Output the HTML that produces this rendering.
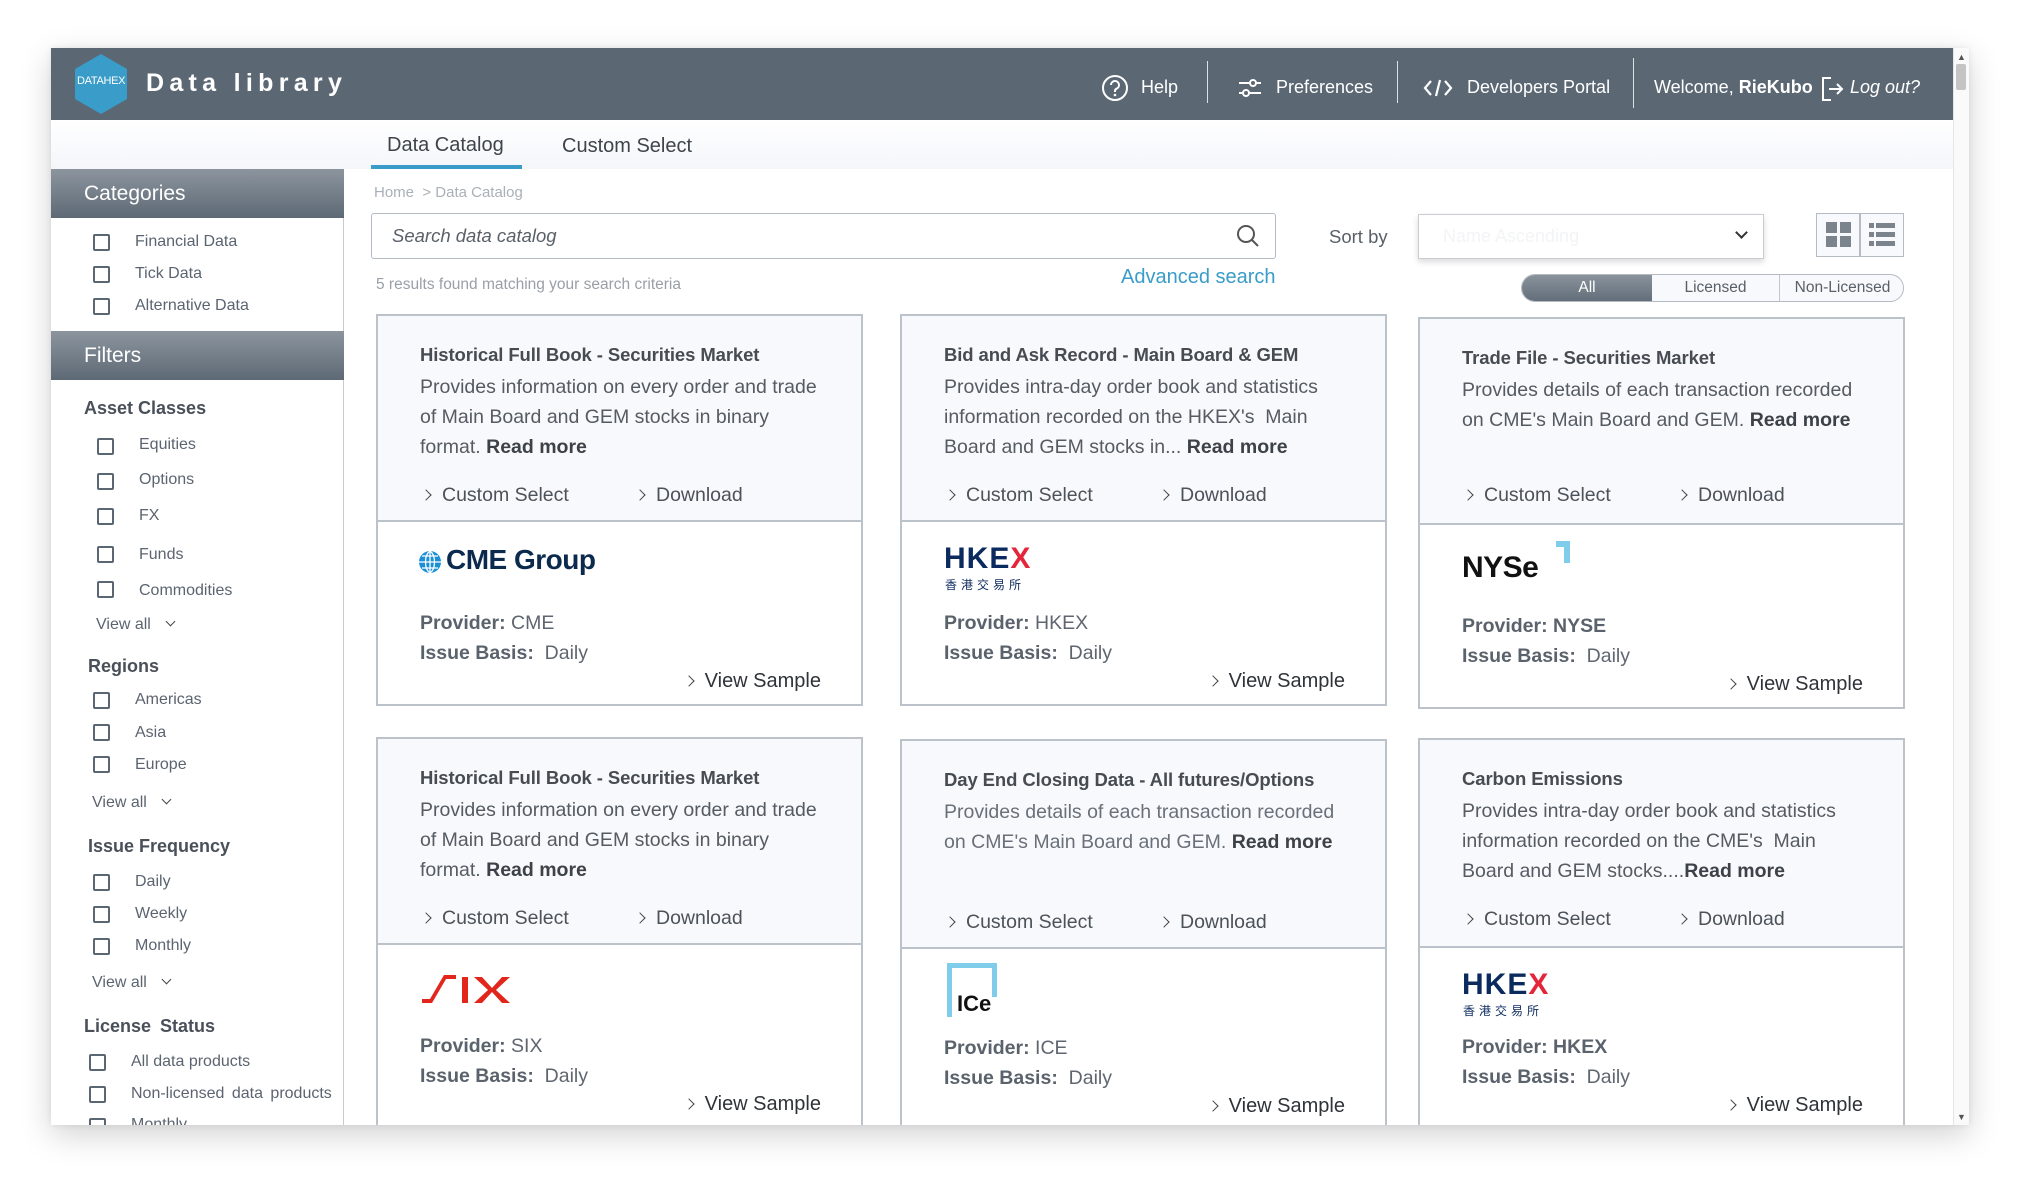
<!DOCTYPE html>
<html><head><meta charset="utf-8">
<style>
*{margin:0;padding:0;box-sizing:border-box}
body{width:2020px;height:1180px;background:#fff;position:relative;overflow:hidden;font-family:"Liberation Sans","Noto Sans CJK SC",sans-serif;color:#4c5259}
.a{position:absolute;white-space:nowrap}
#win{position:absolute;left:51px;top:48px;width:1918px;height:1077px;background:#fff;box-shadow:0 10px 30px rgba(0,0,0,.18),0 0 6px rgba(0,0,0,.08);overflow:hidden}
#hdr{position:absolute;left:0;top:0;width:1902px;height:72px;background:#5b6874}
.nav{position:absolute;top:29px;font-size:18px;color:#fff}
.sep{position:absolute;top:13px;width:1px;height:42px;background:#fff;opacity:.8}
.shead{position:absolute;left:0;width:293px;height:49px;background:linear-gradient(#8c959e,#5d6975);color:#fff;font-size:21px;padding:13px 0 0 33px}
.cb{position:absolute;width:17px;height:17px;border:2px solid #5b6673;border-radius:2px}
.lt{position:absolute;font-size:16px;color:#5b6470;white-space:nowrap}
.sh{position:absolute;font-size:18px;font-weight:bold;color:#4a505a;white-space:nowrap}
.va{position:absolute;font-size:16px;color:#5b6470;white-space:nowrap}
.card{position:absolute;width:487px;border:2px solid #bcc2c9;background:#fff}
.top{position:absolute;left:0;top:0;width:100%;height:206px;background:#f8f9fc;border-bottom:2px solid #bcc2c9}
.tt{position:absolute;left:42px;top:28px;font-size:18.5px;font-weight:bold;color:#474c53;white-space:nowrap;letter-spacing:-.1px}
.ds{position:absolute;left:42px;top:56px;width:405px;font-size:19.5px;line-height:30px;color:#555b62}
.ds b{color:#3d4248}
.ac{position:absolute;top:168px;font-size:19.5px;color:#4c5259;white-space:nowrap}
.ch{display:inline-block;width:8px;height:8px;border-right:1.6px solid #444;border-top:1.6px solid #444;transform:rotate(45deg);margin-right:12px;position:relative;top:-2px}
.pv{position:absolute;left:42px;font-size:19.5px;color:#5f6670;white-space:nowrap}
.pv b{color:#5a626c}
.vs{position:absolute;right:40px;font-size:20px;color:#2f3338;white-space:nowrap}
</style></head><body>
<div id="win">
 <div id="hdr">
  <svg class="a" style="left:22px;top:5px" width="56" height="62" viewBox="0 0 56 62"><polygon points="28,1 54,16 54,46 28,61 2,46 2,16" fill="#3a9cc8" stroke-linejoin="round"/></svg>
  <div class="a" style="left:26px;top:27px;font-size:11px;color:#fff;letter-spacing:-.3px">DATAHEX</div>
  <div class="a" style="left:95px;top:21px;font-size:25px;font-weight:bold;color:#fff;letter-spacing:5.3px">Data library</div>
  <svg class="a" style="left:1050px;top:26px" width="28" height="28" viewBox="0 0 28 28"><circle cx="14" cy="14" r="12" fill="none" stroke="#fff" stroke-width="2"/><path d="M10 11a4 4 0 1 1 5.5 3.7c-1 .5-1.5 1.2-1.5 2.3v1" fill="none" stroke="#fff" stroke-width="2"/><circle cx="14" cy="21" r="1.3" fill="#fff"/></svg>
  <div class="nav" style="left:1090px">Help</div>
  <div class="sep" style="left:1156px"></div>
  <svg class="a" style="left:1186px;top:29px" width="26" height="22" viewBox="0 0 26 22"><path d="M2 6h22M2 16h22" stroke="#fff" stroke-width="2"/><circle cx="16" cy="6" r="3" fill="#5b6874" stroke="#fff" stroke-width="2"/><circle cx="9" cy="16" r="3" fill="#5b6874" stroke="#fff" stroke-width="2"/></svg>
  <div class="nav" style="left:1225px">Preferences</div>
  <div class="sep" style="left:1346px"></div>
  <svg class="a" style="left:1372px;top:30px" width="30" height="20" viewBox="0 0 30 20"><path d="M8 3L2 10l6 7M22 3l6 7-6 7M17 2l-4 16" fill="none" stroke="#fff" stroke-width="2.2"/></svg>
  <div class="nav" style="left:1416px">Developers Portal</div>
  <div class="sep" style="left:1582px;top:10px;height:50px"></div>
  <div class="nav" style="left:1603px">Welcome, <b>RieKubo</b></div>
  <svg class="a" style="left:1770px;top:28px" width="24" height="26" viewBox="0 0 24 26"><path d="M10 2H2v22h8M8 13h13M16 8l5 5-5 5" fill="none" stroke="#fff" stroke-width="2"/></svg>
  <div class="nav" style="left:1799px;font-style:italic">Log out?</div>
 </div>
 <div class="a" style="left:1902px;top:0;width:16px;height:1077px;background:#fafafa;border-left:1px solid #e6e6e6"></div>
 <div class="a" style="left:1906px;top:4px;font-size:9px;color:#555">▲</div>
 <div class="a" style="left:1906px;top:1064px;font-size:9px;color:#555">▼</div>
 <div class="a" style="left:1905px;top:16px;width:10px;height:26px;background:#c4c4c4;border-radius:2px"></div>
 <div class="a" style="left:0;top:72px;width:1902px;height:49px;background:linear-gradient(#fff,#f4f6fa)"></div>
 <div class="a" style="left:336px;top:86px;font-size:20px;color:#3e444b">Data Catalog</div>
 <div class="a" style="left:320px;top:117px;width:151px;height:4px;background:#3a9cc8"></div>
 <div class="a" style="left:511px;top:87px;font-size:20px;color:#3e444b">Custom Select</div>
 <!-- sidebar -->
 <div class="a" style="left:0;top:121px;width:293px;height:956px;border-right:1px solid #c8ccd1"></div>
 <div class="shead" style="top:121px">Categories</div>
 <div class="cb" style="left:42px;top:186px"></div><div class="lt" style="left:84px;top:185px">Financial Data</div>
 <div class="cb" style="left:42px;top:218px"></div><div class="lt" style="left:84px;top:217px">Tick Data</div>
 <div class="cb" style="left:42px;top:250px"></div><div class="lt" style="left:84px;top:249px">Alternative Data</div>
 <div class="shead" style="top:283px">Filters</div>
 <div class="sh" style="left:33px;top:350px">Asset Classes</div>
 <div class="cb" style="left:46px;top:390px"></div><div class="lt" style="left:88px;top:388px">Equities</div>
 <div class="cb" style="left:46px;top:425px"></div><div class="lt" style="left:88px;top:423px">Options</div>
 <div class="cb" style="left:46px;top:460px"></div><div class="lt" style="left:88px;top:459px">FX</div>
 <div class="cb" style="left:46px;top:498px"></div><div class="lt" style="left:88px;top:498px">Funds</div>
 <div class="cb" style="left:46px;top:533px"></div><div class="lt" style="left:88px;top:534px">Commodities</div>
 <div class="va" style="left:45px;top:568px">View all <span class="ch" style="transform:rotate(135deg);width:7px;height:7px;margin-left:12px;top:-4px"></span></div>
 <div class="sh" style="left:37px;top:608px">Regions</div>
 <div class="cb" style="left:42px;top:644px"></div><div class="lt" style="left:84px;top:643px">Americas</div>
 <div class="cb" style="left:42px;top:676px"></div><div class="lt" style="left:84px;top:676px">Asia</div>
 <div class="cb" style="left:42px;top:708px"></div><div class="lt" style="left:84px;top:708px">Europe</div>
 <div class="va" style="left:41px;top:746px">View all <span class="ch" style="transform:rotate(135deg);width:7px;height:7px;margin-left:12px;top:-4px"></span></div>
 <div class="sh" style="left:37px;top:788px">Issue Frequency</div>
 <div class="cb" style="left:42px;top:826px"></div><div class="lt" style="left:84px;top:825px">Daily</div>
 <div class="cb" style="left:42px;top:858px"></div><div class="lt" style="left:84px;top:857px">Weekly</div>
 <div class="cb" style="left:42px;top:890px"></div><div class="lt" style="left:84px;top:889px">Monthly</div>
 <div class="va" style="left:41px;top:926px">View all <span class="ch" style="transform:rotate(135deg);width:7px;height:7px;margin-left:12px;top:-4px"></span></div>
 <div class="sh" style="left:33px;top:968px;word-spacing:4px">License Status</div>
 <div class="cb" style="left:38px;top:1006px"></div><div class="lt" style="left:80px;top:1005px">All data products</div>
 <div class="cb" style="left:38px;top:1038px"></div><div class="lt" style="left:80px;top:1037px;word-spacing:3px">Non-licensed data products</div>
 <div class="cb" style="left:38px;top:1070px"></div><div class="lt" style="left:80px;top:1068px">Monthly</div>
 <!-- main -->
 <div class="a" style="left:323px;top:136px;font-size:15px;color:#aab0b7">Home &nbsp;&gt; Data Catalog</div>
 <div class="a" style="left:320px;top:165px;width:905px;height:46px;border:1.5px solid #b5bbc2;border-radius:3px;background:#fff"></div>
 <div class="a" style="left:341px;top:177px;font-size:18.5px;font-style:italic;color:#5a6068">Search data catalog</div>
 <svg class="a" style="left:1184px;top:175px" width="26" height="26" viewBox="0 0 26 26"><circle cx="11" cy="11" r="8" fill="none" stroke="#555" stroke-width="2"/><path d="M17 17l6 6" stroke="#555" stroke-width="2"/></svg>
 <div class="a" style="left:325px;top:228px;font-size:15.5px;color:#999fa6">5 results found matching your search criteria</div>
 <div class="a" style="left:1070px;top:218px;font-size:20px;color:#3a9cc8">Advanced search</div>
 <div class="a" style="left:1278px;top:178px;font-size:18.5px;color:#5a6068">Sort by</div>
 <div class="a" style="left:1367px;top:166px;width:346px;height:45px;border:1.5px solid #c9cdd2;background:#fff;box-shadow:0 3px 6px rgba(0,0,0,.15)"></div>
 <div class="a" style="left:1392px;top:178px;font-size:18px;color:#f3f4f6">Name Ascending</div>
 <div class="a" style="left:1686px;top:180px;width:9px;height:9px;border-right:2px solid #333;border-bottom:2px solid #333;transform:rotate(45deg)"></div>
 <div class="a" style="left:1765px;top:165px;width:88px;height:44px;border:1.5px solid #b5bbc2;background:#f8f9fc"></div>
 <div class="a" style="left:1808px;top:165px;width:1.5px;height:44px;background:#b5bbc2"></div>
 <svg class="a" style="left:1775px;top:174px" width="26" height="26" viewBox="0 0 26 26" fill="#7b838c"><rect x="0" y="0" width="11" height="11"/><rect x="14" y="0" width="11" height="11"/><rect x="0" y="14" width="11" height="11"/><rect x="14" y="14" width="11" height="11"/></svg>
 <svg class="a" style="left:1818px;top:175px" width="26" height="24" viewBox="0 0 26 24" fill="#7b838c"><rect x="0" y="0" width="5" height="5"/><rect x="7" y="0" width="19" height="5"/><rect x="0" y="9" width="5" height="5"/><rect x="7" y="9" width="19" height="5"/><rect x="0" y="18" width="5" height="5"/><rect x="7" y="18" width="19" height="5"/></svg>
 <div class="a" style="left:1470px;top:226px;width:383px;height:28px;border:1.5px solid #b5bbc2;border-radius:14px;overflow:hidden;background:#f8f9fc">
  <div class="a" style="left:0;top:0;width:130px;height:28px;background:linear-gradient(#8a939c,#5f6b77);color:#fff;font-size:15.5px;text-align:center;line-height:25px">All</div>
  <div class="a" style="left:130px;top:0;width:128px;height:28px;border-right:1.5px solid #c2c7cd;color:#5a6068;font-size:15.5px;text-align:center;line-height:25px">Licensed</div>
  <div class="a" style="left:258px;top:0;width:125px;height:28px;color:#5a6068;font-size:15.5px;text-align:center;line-height:25px">Non-Licensed</div>
 </div>

 <!-- Row 1 -->
 <div class="card" style="left:325px;top:266px;height:392px">
  <div class="top"></div>
  <div class="tt">Historical Full Book - Securities Market</div>
  <div class="ds">Provides information on every order and trade of Main Board and GEM stocks in binary format. <b>Read more</b></div>
  <div class="ac" style="left:44px"><span class="ch"></span>Custom Select</div>
  <div class="ac" style="left:258px"><span class="ch"></span>Download</div>
  <svg class="a" style="left:40px;top:234px" width="24" height="24" viewBox="0 0 24 24"><circle cx="12" cy="12" r="11" fill="#1a8fd6"/><path d="M1 12h22M12 1v22M4 6h16M4 18h16M12 1c-6 4-6 18 0 22M12 1c6 4 6 18 0 22" stroke="#fff" stroke-width="1.3" fill="none"/></svg>
  <div class="a" style="left:68px;top:228px;font-size:28px;font-weight:bold;color:#0b2a4e;letter-spacing:-.5px">CME Group</div>
  <div class="pv" style="top:296px"><b>Provider:</b> CME</div>
  <div class="pv" style="top:326px"><b>Issue Basis:</b>&nbsp; Daily</div>
  <div class="vs" style="top:354px"><span class="ch"></span>View Sample</div>
 </div>
 <div class="card" style="left:849px;top:266px;height:392px">
  <div class="top"></div>
  <div class="tt">Bid and Ask Record - Main Board &amp; GEM</div>
  <div class="ds">Provides intra-day order book and statistics information recorded on the HKEX's &nbsp;Main Board and GEM stocks in... <b>Read more</b></div>
  <div class="ac" style="left:44px"><span class="ch"></span>Custom Select</div>
  <div class="ac" style="left:258px"><span class="ch"></span>Download</div>
  <div class="a" style="left:42px;top:226px;font-size:30px;font-weight:bold;color:#0b2a5e;letter-spacing:1px">HKE<span style="color:#e4263a">X</span></div>
  <div class="a" style="left:43px;top:260px;font-size:12px;color:#0b2a5e;letter-spacing:4px">香港交易所</div>
  <div class="pv" style="top:296px"><b>Provider:</b> HKEX</div>
  <div class="pv" style="top:326px"><b>Issue Basis:</b>&nbsp; Daily</div>
  <div class="vs" style="top:354px"><span class="ch"></span>View Sample</div>
 </div>
 <div class="card" style="left:1367px;top:269px;height:392px">
  <div class="top"></div>
  <div class="tt">Trade File - Securities Market</div>
  <div class="ds">Provides details of each transaction recorded on CME's Main Board and GEM. <b>Read more</b></div>
  <div class="ac" style="left:44px;top:165px"><span class="ch"></span>Custom Select</div>
  <div class="ac" style="left:258px;top:165px"><span class="ch"></span>Download</div>
  <div class="a" style="left:42px;top:232px;font-size:30px;font-weight:bold;color:#111;letter-spacing:-.5px">NYSe</div>
  <svg class="a" style="left:136px;top:222px" width="14" height="22" viewBox="0 0 14 22"><path d="M0 0h14v22h-6V6H0z" fill="#7fcdea"/></svg>
  <div class="pv" style="top:296px"><b>Provider: NYSE</b></div>
  <div class="pv" style="top:326px"><b>Issue Basis:</b>&nbsp; Daily</div>
  <div class="vs" style="top:354px"><span class="ch"></span>View Sample</div>
 </div>

 <!-- Row 2 -->
 <div class="card" style="left:325px;top:689px;height:420px">
  <div class="top"></div>
  <div class="tt">Historical Full Book - Securities Market</div>
  <div class="ds">Provides information on every order and trade of Main Board and GEM stocks in binary format. <b>Read more</b></div>
  <div class="ac" style="left:44px"><span class="ch"></span>Custom Select</div>
  <div class="ac" style="left:258px"><span class="ch"></span>Download</div>
  <svg class="a" style="left:44px;top:236px" width="106" height="30" viewBox="0 0 106 30"><path d="M0 28h10l14-24h10v-4h-12L8 24H0z" fill="#e2261c"/><rect x="40" y="2" width="6" height="26" fill="#e2261c"/><path d="M52 2h8l10 11 10-11h8L74 15l14 13h-8L70 17 60 28h-8l14-13z" fill="#e2261c"/></svg>
  <div class="pv" style="top:296px"><b>Provider:</b> SIX</div>
  <div class="pv" style="top:326px"><b>Issue Basis:</b>&nbsp; Daily</div>
  <div class="vs" style="top:354px"><span class="ch"></span>View Sample</div>
 </div>
 <div class="card" style="left:849px;top:691px;height:420px">
  <div class="top" style="height:208px"></div>
  <div class="tt">Day End Closing Data - All futures/Options</div>
  <div class="ds" style="color:#6a7079">Provides details of each transaction recorded on CME's Main Board and GEM. <b>Read more</b></div>
  <div class="ac" style="left:44px;top:170px"><span class="ch"></span>Custom Select</div>
  <div class="ac" style="left:258px;top:170px"><span class="ch"></span>Download</div>
  <svg class="a" style="left:45px;top:222px" width="52" height="54" viewBox="0 0 52 54"><path d="M0 0h50v34h-5V5H5v49H0z" fill="#7fcdea"/></svg>
  <div class="a" style="left:55px;top:250px;font-size:22px;font-weight:bold;color:#111">ICe</div>
  <div class="pv" style="top:296px"><b>Provider:</b> ICE</div>
  <div class="pv" style="top:326px"><b>Issue Basis:</b>&nbsp; Daily</div>
  <div class="vs" style="top:354px"><span class="ch"></span>View Sample</div>
 </div>
 <div class="card" style="left:1367px;top:690px;height:420px">
  <div class="top" style="height:208px"></div>
  <div class="tt">Carbon Emissions</div>
  <div class="ds">Provides intra-day order book and statistics information recorded on the CME's &nbsp;Main Board and GEM stocks....<b>Read more</b></div>
  <div class="ac" style="left:44px;top:168px"><span class="ch"></span>Custom Select</div>
  <div class="ac" style="left:258px;top:168px"><span class="ch"></span>Download</div>
  <div class="a" style="left:42px;top:228px;font-size:30px;font-weight:bold;color:#0b2a5e;letter-spacing:1px">HKE<span style="color:#e4263a">X</span></div>
  <div class="a" style="left:43px;top:262px;font-size:12px;color:#0b2a5e;letter-spacing:4px">香港交易所</div>
  <div class="pv" style="top:296px"><b>Provider: HKEX</b></div>
  <div class="pv" style="top:326px"><b>Issue Basis:</b>&nbsp; Daily</div>
  <div class="vs" style="top:354px"><span class="ch"></span>View Sample</div>
 </div>
</div>
</body></html>
